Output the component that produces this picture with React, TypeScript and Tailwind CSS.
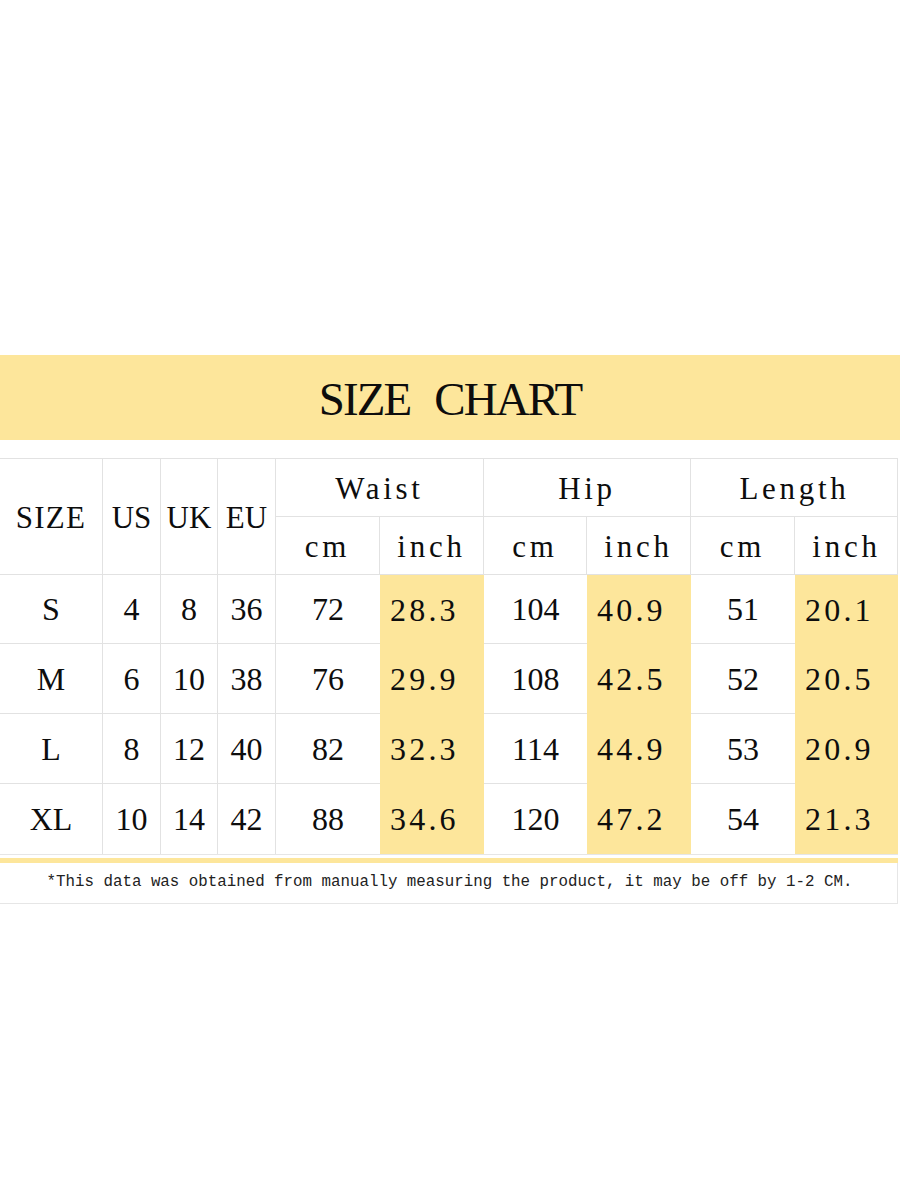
const rows = [
  { size: 'S', us: '4', uk: '8', eu: '36', waist: ['72', '28.3'], hip: ['104', '40.9'], len: ['51', '20.1'] },
  { size: 'M', us: '6', uk: '10', eu: '38', waist: ['76', '29.9'], hip: ['108', '42.5'], len: ['52', '20.5'] },
  { size: 'L', us: '8', uk: '12', eu: '40', waist: ['82', '32.3'], hip: ['114', '44.9'], len: ['53', '20.9'] },
  { size: 'XL', us: '10', uk: '14', eu: '42', waist: ['88', '34.6'], hip: ['120', '47.2'], len: ['54', '21.3'] },
]

const cols = 'grid grid-cols-[103px_58px_57px_58px_104px_104px_103px_104px_104px_103px]'

export default function App() {
  return (
    <div className="w-[900px] h-[1200px] bg-white text-[#0d0d0d] flex flex-col" style={{ fontFamily: '"Liberation Serif", serif' }}>
      <div className="h-[355px]" />

      {/* banner */}
      <div className="h-[85px] bg-[#fde69b] flex items-center justify-center">
        <span className="text-[47px] tracking-[-0.04em] [word-spacing:14px] leading-none pt-1">SIZE CHART</span>
      </div>

      <div className="h-[18px]" />

      {/* table */}
      <div className="w-[898px] border-t border-r border-[#e2e2e2]">
        <div className={`${cols} grid-rows-[58px_58px] text-[31px]`}>
          <div className="row-span-2 flex items-center justify-center pt-1 border-r border-b border-[#e2e2e2] tracking-[0.04em]">SIZE</div>
          <div className="row-span-2 flex items-center justify-center pt-1 border-r border-b border-[#e2e2e2]">US</div>
          <div className="row-span-2 flex items-center justify-center pt-1 border-r border-b border-[#e2e2e2]">UK</div>
          <div className="row-span-2 flex items-center justify-center pt-1 border-r border-b border-[#e2e2e2]">EU</div>
          <div className="col-span-2 flex items-center justify-center pt-1 border-r border-b border-[#e2e2e2] tracking-[0.12em]">Waist</div>
          <div className="col-span-2 flex items-center justify-center pt-1 border-r border-b border-[#e2e2e2] tracking-[0.12em]">Hip</div>
          <div className="col-span-2 flex items-center justify-center pt-1 border-b border-[#e2e2e2] tracking-[0.12em]">Length</div>
          {['cm', 'inch', 'cm', 'inch', 'cm', 'inch'].map((u, i) => (
            <div
              key={i}
              className={`flex items-center justify-center pt-1 border-b border-[#e2e2e2] tracking-[0.12em] ${i < 5 ? 'border-r' : ''}`}
            >
              {u}
            </div>
          ))}
        </div>

        {rows.map((r, ri) => {
          const cells = [r.size, r.us, r.uk, r.eu, r.waist[0], r.waist[1], r.hip[0], r.hip[1], r.len[0], r.len[1]]
          return (
            <div key={r.size} className={`${cols} ${ri === 0 ? 'h-[69px]' : 'h-[70px]'} text-[32px]`}>
              {cells.map((c, i) => {
                const yellow = i === 5 || i === 7 || i === 9
                const border = yellow ? '' : `${ri < 3 ? 'border-b' : ''} ${i === 4 || i === 6 || i === 8 ? '' : 'border-r'}`
                return (
                  <div
                    key={i}
                    className={`flex items-center ${yellow ? 'bg-[#fde69b] justify-start pl-[10px] tracking-[0.1em]' : 'justify-center'} ${border} border-[#e2e2e2]`}
                  >
                    {c}
                  </div>
                )
              })}
            </div>
          )
        })}
      </div>

      <div className="h-[4px] w-[898px] border-t border-[#e6e6e6]" />
      <div className="h-[5px] w-[898px] bg-[#fde69b]" />

      {/* footer note */}
      <div className="w-[898px] h-[41px] border-b border-r border-[#e6e6e6] flex items-center justify-center">
        <span className="text-[15.8px] text-[#222] pl-[2px]" style={{ fontFamily: '"Liberation Mono", monospace' }}>
          *This data was obtained from manually measuring the product, it may be off by 1-2 CM.
        </span>
      </div>
    </div>
  )
}
